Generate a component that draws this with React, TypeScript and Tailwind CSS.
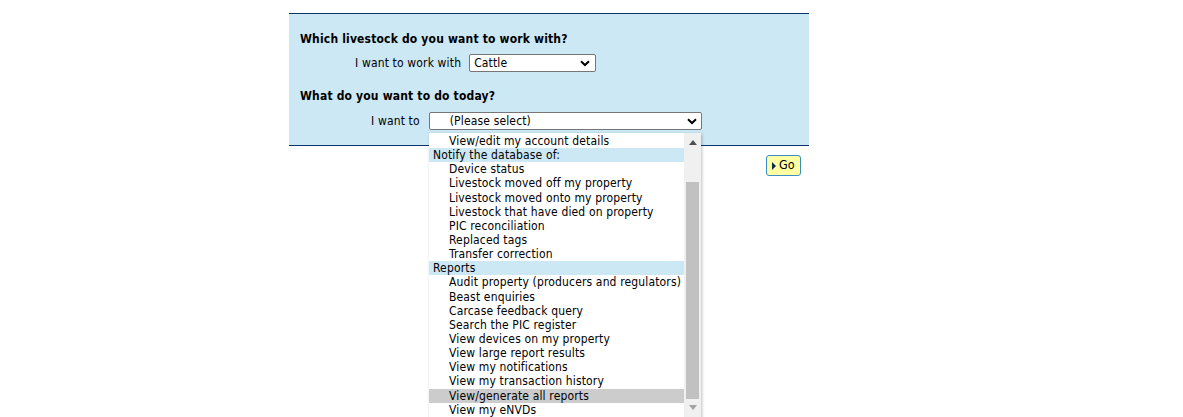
import React from "react";

const groups: { header?: string; items: string[] }[] = [
  { items: ["View/edit my account details"] },
  {
    header: "Notify the database of:",
    items: [
      "Device status",
      "Livestock moved off my property",
      "Livestock moved onto my property",
      "Livestock that have died on property",
      "PIC reconciliation",
      "Replaced tags",
      "Transfer correction",
    ],
  },
  {
    header: "Reports",
    items: [
      "Audit property (producers and regulators)",
      "Beast enquiries",
      "Carcase feedback query",
      "Search the PIC register",
      "View devices on my property",
      "View large report results",
      "View my notifications",
      "View my transaction history",
      "View/generate all reports",
      "View my eNVDs",
    ],
  },
];

function Chevron() {
  return (
    <svg width="10" height="7" viewBox="0 0 10 7" className="shrink-0">
      <path d="M1 1.2 L5 5 L9 1.2" fill="none" stroke="#000" strokeWidth="2" />
    </svg>
  );
}

export default function App() {
  return (
    <div
      className="relative w-full h-[417px] overflow-hidden bg-white text-[12px] text-black tracking-[0.15px]"
      style={{ fontFamily: "'DejaVu Sans Condensed', 'DejaVu Sans', sans-serif" }}
    >
      <div className="pt-[13px] flex">
        <div className="ml-[289px] w-[520px] h-[133px] border-t border-b border-[#0b3566] bg-[#cde8f5] px-[11px] pt-[18px]">
          <div className="font-bold leading-[14px] tracking-[0.17px]">Which livestock do you want to work with?</div>
          <div className="flex items-center mt-[8px] ml-[55px] gap-[8px]">
            <span>I want to work with</span>
            <div className="w-[127px] h-[18px] border border-[#767676] rounded-[2px] bg-white flex items-center justify-between pl-[4px] pr-[5px]">
              <span>Cattle</span>
              <Chevron />
            </div>
          </div>
          <div className="font-bold leading-[14px] mt-[17px] tracking-[0.17px]">What do you want to do today?</div>
          <div className="flex items-center mt-[9px] ml-[71px] gap-[9px]">
            <span>I want to</span>
            <div className="w-[273px] h-[18px] border border-[#767676] rounded-[2px] bg-white flex items-center justify-between pl-[20px] pr-[4px]">
              <span>(Please select)</span>
              <Chevron />
            </div>
          </div>
        </div>
        <div className="ml-[-43px] mt-[142px]">
          <div className="h-[21px] pl-[5px] pr-[5px] flex items-center gap-[3px] border border-[#3a8fc9] rounded-[3px] bg-[#ffffa3]">
            <svg width="4" height="8" viewBox="0 0 4 8">
              <path d="M0 0 L4 4 L0 8 Z" fill="#0b2a50" />
            </svg>
            <span className="text-[12.5px]">Go</span>
          </div>
        </div>
      </div>

      <div className="absolute left-[429px] top-[133px] w-[272px] h-[290px] bg-white flex shadow-[1px_1px_3px_rgba(0,0,0,0.25)]">
        <div className="flex-1 pt-[1px]">
          {groups.map((g, gi) => (
            <div key={gi}>
              {g.header && (
                <div className="h-[14.15px] leading-[14.15px] pl-[4px] bg-[#cde8f5] whitespace-nowrap">{g.header}</div>
              )}
              {g.items.map((it) => (
                <div
                  key={it}
                  className={
                    "h-[14.15px] leading-[14.15px] pl-[20px] whitespace-nowrap " +
                    (it === "View/generate all reports" ? "bg-[#cccccc]" : "")
                  }
                >
                  {it}
                </div>
              ))}
            </div>
          ))}
        </div>
        <div className="w-[17px] bg-[#f0f0f0] flex flex-col items-center">
          <div className="h-[16px] flex items-center justify-center mt-[1px]">
            <svg width="8" height="5" viewBox="0 0 8 5">
              <path d="M0 5 L4 0 L8 5 Z" fill="#505050" />
            </svg>
          </div>
          <div className="mt-[32px] w-[13px] h-[217px] bg-[#c1c1c1]" />
          <div className="h-[16px] flex items-center justify-center">
            <svg width="8" height="5" viewBox="0 0 8 5">
              <path d="M0 0 L4 5 L8 0 Z" fill="#a3a3a3" />
            </svg>
          </div>
        </div>
      </div>
    </div>
  );
}
